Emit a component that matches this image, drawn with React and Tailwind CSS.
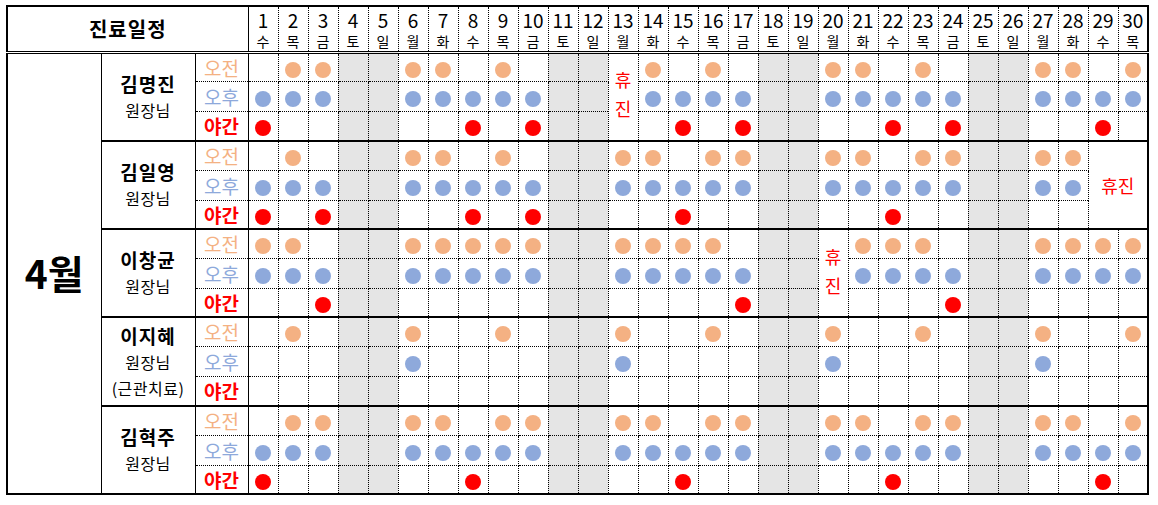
import React from "react";

const weekdays = ["수", "목", "금", "토", "일", "월", "화"];
const days = Array.from({ length: 30 }, (_, i) => ({
  d: i + 1,
  wd: weekdays[i % 7],
  weekend: weekdays[i % 7] === "토" || weekdays[i % 7] === "일",
}));

const doctors = [
  {
    name: "김명진",
    sub: ["원장님"],
    am: [2, 3, 6, 7, 9, 14, 16, 20, 21, 23, 27, 28, 30],
    pm: [1, 2, 3, 6, 7, 8, 9, 10, 14, 15, 16, 17, 20, 21, 22, 23, 24, 27, 28, 29, 30],
    night: [1, 8, 10, 15, 17, 22, 24, 29],
    off: { day: 13, span: 1 },
    rows: ["h-[29px]", "h-[30px]", "h-[30px]"],
  },
  {
    name: "김일영",
    sub: ["원장님"],
    am: [2, 6, 7, 9, 13, 14, 16, 17, 20, 21, 23, 24, 27, 28],
    pm: [1, 2, 3, 6, 7, 8, 9, 10, 13, 14, 15, 16, 17, 20, 21, 22, 23, 24, 27, 28],
    night: [1, 3, 8, 10, 15, 22],
    off: { day: 29, span: 2 },
    rows: ["h-[29px]", "h-[30px]", "h-[29px]"],
  },
  {
    name: "이창균",
    sub: ["원장님"],
    am: [1, 2, 6, 7, 8, 9, 10, 13, 14, 15, 16, 21, 22, 23, 27, 28, 29, 30],
    pm: [1, 2, 3, 6, 7, 8, 9, 10, 13, 14, 15, 16, 17, 21, 22, 23, 24, 27, 28, 29, 30],
    night: [3, 17, 24],
    off: { day: 20, span: 1 },
    rows: ["h-[29px]", "h-[30px]", "h-[29px]"],
  },
  {
    name: "이지혜",
    sub: ["원장님", "(근관치료)"],
    am: [2, 6, 9, 13, 16, 20, 23, 27, 30],
    pm: [6, 13, 20, 27],
    night: [],
    rows: ["h-[29px]", "h-[30px]", "h-[30px]"],
  },
  {
    name: "김혁주",
    sub: ["원장님"],
    am: [2, 3, 6, 7, 9, 10, 13, 14, 16, 17, 20, 21, 23, 24, 27, 28, 30],
    pm: [1, 2, 3, 6, 7, 8, 9, 10, 13, 14, 15, 16, 17, 20, 21, 22, 23, 24, 27, 28, 29, 30],
    night: [1, 8, 15, 22, 29],
    rows: ["h-[29px]", "h-[30px]", "h-[29px]"],
  },
];

const periods = [
  { key: "am", label: "오전", text: "text-[#f4b183] font-normal", dot: "bg-[#f4b183]" },
  { key: "pm", label: "오후", text: "text-[#8ea9db] font-normal", dot: "bg-[#8ea9db]" },
  { key: "night", label: "야간", text: "text-[#ff0000] font-bold", dot: "bg-[#ff0000]" },
];

const App = () => {
  return (
    <div
      className="min-h-screen bg-white pt-[5px] pl-[6px] text-black"
      style={{ fontFamily: '"Noto Sans CJK KR", "Noto Sans", sans-serif' }}
    >
      <table className="table-fixed border-collapse border-2 border-solid border-black w-[1142px]">
        <colgroup>
          <col className="w-[94px] border-r border-solid border-black" />
          <col className="w-[94px] border-r border-solid border-black" />
          <col className="w-[53px] border-r border-solid border-black" />
          {days.map((day) => (
            <col key={day.d} className="w-[30px]" />
          ))}
        </colgroup>
        <thead>
          <tr className="h-[46px] border-b-[3px] border-double border-black">
            <th colSpan={3} className="p-0 text-[20px] font-bold leading-none tracking-[1px]">
              진료일정
            </th>
            {days.map((day) => (
              <th
                key={day.d}
                className="p-0 border-x border-dotted border-black font-normal align-top"
              >
                <div className="flex flex-col items-center pt-[2px]">
                  <span className="text-[19px] leading-[22px]">{day.d}</span>
                  <span className="text-[14px] leading-[18px] mt-[1px]">{day.wd}</span>
                </div>
              </th>
            ))}
          </tr>
        </thead>
        <tbody>
          {doctors.map((doc, gi) =>
            periods.map((p, pi) => (
              <tr
                key={`${gi}-${pi}`}
                className={`${doc.rows[pi]} ${pi === 0 ? "border-t-2 border-solid border-black" : ""}`}
              >
                {gi === 0 && pi === 0 && (
                  <td rowSpan={15} className="p-0 text-center align-middle">
                    <span className="text-[39px] font-bold leading-none">4월</span>
                  </td>
                )}
                {pi === 0 && (
                  <td rowSpan={3} className="p-0 text-center align-middle">
                    <div className="flex flex-col items-center leading-[26px]">
                      <span className="text-[19px] font-bold tracking-[1px]">{doc.name}</span>
                      {doc.sub.map((s) => (
                        <span key={s} className="text-[16px] tracking-[0.5px]">
                          {s}
                        </span>
                      ))}
                    </div>
                  </td>
                )}
                <td
                  className={`p-0 text-center align-middle border-y border-dotted border-black text-[19px] leading-none ${p.text}`}
                >
                  {p.label}
                </td>
                {days.map((day) => {
                  const off = doc.off;
                  if (off && day.d >= off.day && day.d < off.day + off.span) {
                    if (pi !== 0 || day.d !== off.day) return null;
                    return (
                      <td
                        key={day.d}
                        rowSpan={3}
                        colSpan={off.span}
                        className="p-0 text-center align-middle border border-dotted border-black text-[#ff0000] text-[18px]"
                      >
                        {off.span > 1 ? (
                          <span className="leading-none">휴진</span>
                        ) : (
                          <div className="flex flex-col items-center leading-[29px] pb-[5px]">
                            <span>휴</span>
                            <span>진</span>
                          </div>
                        )}
                      </td>
                    );
                  }
                  const on = doc[p.key].includes(day.d);
                  return (
                    <td
                      key={day.d}
                      className={`p-0 text-center align-middle border border-dotted border-black ${
                        day.weekend ? "bg-[#e5e5e5]" : ""
                      }`}
                    >
                      {on && (
                        <span
                          className={`inline-block w-4 h-4 rounded-full align-middle ${p.dot}`}
                        />
                      )}
                    </td>
                  );
                })}
              </tr>
            ))
          )}
        </tbody>
      </table>
    </div>
  );
};

export default App;
